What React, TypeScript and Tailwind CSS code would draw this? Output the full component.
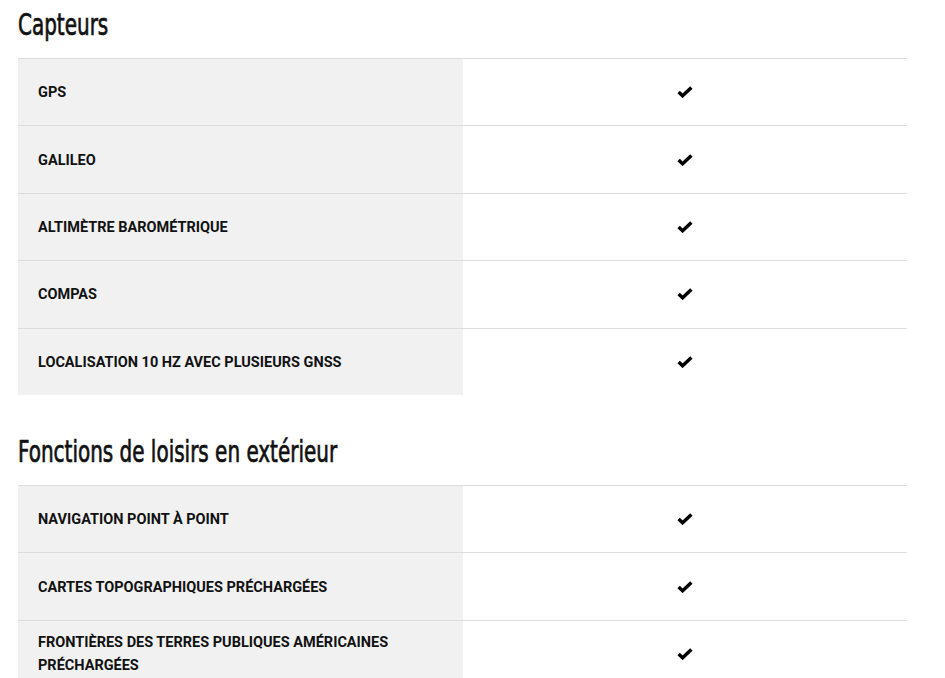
interface ISpecRow {
  label: string;
  value: boolean;
}

interface ISection {
  title: string;
  rows: ISpecRow[];
}

const sections: ISection[] = [
  {
    title: "Capteurs",
    rows: [
      { label: "GPS", value: true },
      { label: "GALILEO", value: true },
      { label: "ALTIMÈTRE BAROMÉTRIQUE", value: true },
      { label: "COMPAS", value: true },
      { label: "LOCALISATION 10 HZ AVEC PLUSIEURS GNSS", value: true },
    ],
  },
  {
    title: "Fonctions de loisirs en extérieur",
    rows: [
      { label: "NAVIGATION POINT À POINT", value: true },
      { label: "CARTES TOPOGRAPHIQUES PRÉCHARGÉES", value: true },
      { label: "FRONTIÈRES DES TERRES PUBLIQUES AMÉRICAINES PRÉCHARGÉES", value: true },
    ],
  },
];

// heavy check mark
const CheckMark = () => (
  <svg width="16" height="12" viewBox="0 0 16 12" className="text-black">
    <polyline
      points="1.6,6 5.6,9.8 14.4,1.4"
      fill="none"
      stroke="currentColor"
      strokeWidth="3.4"
      strokeLinejoin="miter"
    />
  </svg>
);

const SpecSection = ({ section, first }: { section: ISection; first: boolean }) => (
  <section className={first ? "" : "mt-[37px]"}>
    {/* Section heading */}
    <h2
      className="h-[40px] mt-[5px] mb-[13px] text-[30px] leading-[40px] font-normal text-[#111] whitespace-nowrap origin-left scale-x-[0.74] [-webkit-text-stroke:0.7px_#111]"
      style={{ fontFamily: '"DejaVu Sans Condensed", "DejaVu Sans", sans-serif', fontStretch: "condensed" }}
    >
      {section.title}
    </h2>

    {/* Spec table */}
    <div>
      {section.rows.map((row) => (
        <div key={row.label} className="grid grid-cols-2 border-t border-[#dcdcdc]">
          <div className="h-[66.4px] flex items-center bg-[#f1f1f1] px-5 pt-px">
            <span className="text-[14.5px] leading-[23px] font-bold text-[#111]">{row.label}</span>
          </div>
          <div className="h-[66.4px] flex items-center justify-center">
            {row.value && <CheckMark />}
          </div>
        </div>
      ))}
    </div>
  </section>
);

const App = () => {
  return (
    <div
      className="min-h-screen bg-white pl-[18px] pr-[38px] overflow-hidden"
      style={{ fontFamily: "Roboto, 'Liberation Sans', sans-serif" }}
    >
      {sections.map((section, i) => (
        <SpecSection key={section.title} section={section} first={i === 0} />
      ))}
    </div>
  );
};

export default App;
